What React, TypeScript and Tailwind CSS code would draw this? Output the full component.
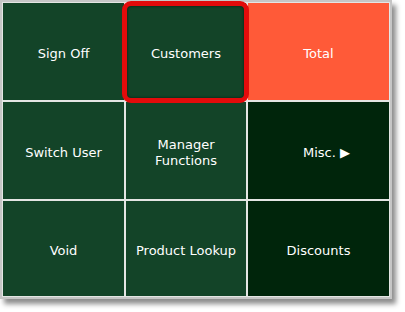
import React from "react";

type Cell = { label: React.ReactNode; bg: string; extra?: string };

const CELLS: Cell[] = [
  { label: "Sign Off", bg: "bg-[#134428]" },
  { label: "Customers", bg: "bg-[#134428]" },
  { label: "Total", bg: "bg-[#ff5a38]" },
  { label: "Switch User", bg: "bg-[#134428]" },
  {
    label: (
      <>
        Manager
        <br />
        Functions
      </>
    ),
    bg: "bg-[#134428]",
  },
  { label: "Misc. \u25B6", bg: "bg-[#00250b]", extra: "pl-[16px]" },
  { label: "Void", bg: "bg-[#134428]" },
  { label: "Product Lookup", bg: "bg-[#134428]" },
  { label: "Discounts", bg: "bg-[#00250b]" },
];

export default function App() {
  return (
    <div className="w-[405px] h-[312px] bg-white relative" style={{ fontFamily: '"DejaVu Sans", Verdana, sans-serif' }}>
      <div className="w-[392px] border-2 border-[#c6c6c6] bg-[#e4e6e4] p-[1px] shadow-[4px_5px_5px_rgba(0,0,0,0.45)]">
        <div className="grid grid-cols-[121px_120px_141px] grid-rows-[97px_97px_95px] gap-[2px]">
          {CELLS.map((cell, i) => (
            <div
              key={i}
              className={`${cell.bg} ${cell.extra ?? ""} flex items-center justify-center pt-[4px] text-center text-white text-[13px] leading-[16px]`}
            >
              {cell.label}
            </div>
          ))}
        </div>
      </div>

      {/* highlight around Customers */}
      <div className="absolute left-[122px] top-[1px] w-[127px] h-[102px] rounded-[9px] border-[5px] border-[#e30b0b] shadow-[inset_0_0_3px_rgba(0,0,0,0.6)]" />
    </div>
  );
}
